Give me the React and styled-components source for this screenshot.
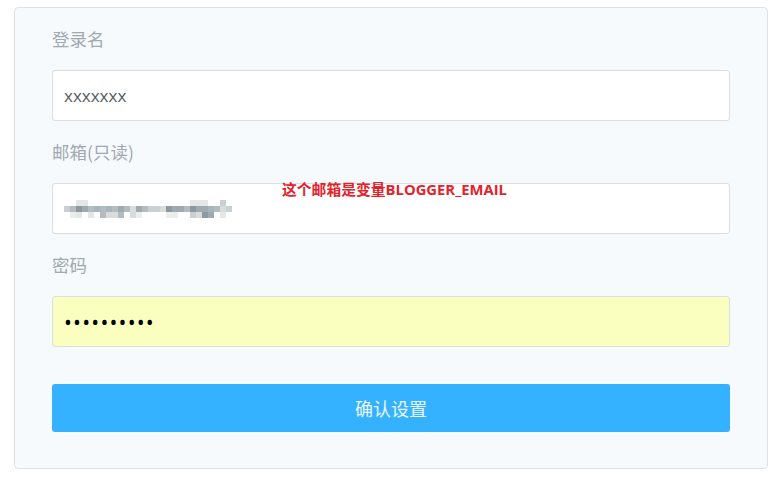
import React from "react"
import styled, { createGlobalStyle } from "styled-components"

const GlobalStyle = createGlobalStyle`
  html, body {
    margin: 0;
    padding: 0;
    background: #ffffff;
  }
  body {
    font-family: "Open Sans", "Noto Sans CJK SC", sans-serif;
  }
`

const Page = styled.div`
  padding: 7px 15px 9px 14px;
`

const Panel = styled.form`
  position: relative;
  box-sizing: border-box;
  width: 754px;
  height: 462px;
  padding: 19px 37px 36px;
  background: #f6fafd;
  border: 1px solid #dde3e8;
  border-radius: 4px;
  display: flex;
  flex-direction: column;
`

const Field = styled.div`
  position: relative;
  display: flex;
  flex-direction: column;
  margin-bottom: ${(p) => (p.last ? "37px" : "19px")};
`

const Label = styled.label`
  font-family: "Noto Sans CJK SC", sans-serif;
  font-size: 17.5px;
  line-height: 24px;
  color: #a0a9b1;
  margin-bottom: 19px;
`

const InputBox = styled.div`
  box-sizing: border-box;
  height: 51px;
  border: 1px solid #dadfe3;
  border-radius: 3px;
  background: ${(p) => p.bg || "#ffffff"};
  display: flex;
  align-items: center;
  padding: 0 11px;
`

const TextInput = styled.input`
  flex: 1;
  border: none;
  outline: none;
  background: transparent;
  padding: 0;
  font-family: "Open Sans", sans-serif;
  font-size: ${(p) => (p.type === "password" ? "21px" : "17px")};
  letter-spacing: ${(p) => (p.type === "password" ? "1.2px" : "0")};
  color: ${(p) => (p.type === "password" ? "#000" : "#555b60")};
`

const Note = styled.span`
  position: absolute;
  left: 230px;
  top: 40px;
  font-family: "Open Sans", "Noto Sans CJK SC", sans-serif;
  font-weight: 700;
  font-size: 14.8px;
  line-height: 18px;
  color: #e3232c;
  white-space: nowrap;
`

const Submit = styled.button`
  height: 48px;
  border: none;
  border-radius: 3px;
  background: #35b2ff;
  color: #eaf6ff;
  font-family: "Noto Sans CJK SC", sans-serif;
  font-size: 18px;
  cursor: pointer;
`

const mosaicColors = [
  "#f3f5f4", "#e3e7e8", "#c9d0d4", "#b3bcc1", "#9ea9b0", "#d8dcda", "#a7b5bd", "#eceeeb", "#8d99a1",
]

const rows = [
  "0011000000000000000001110020",
  "2384363634354322584438446352",
  "0710103553057000077002584010",
]

const Mosaic = () => (
  <svg width="168" height="18" viewBox="0 0 168 18">
    {rows.map((row, r) =>
      row.split("").map((c, i) => (
        <rect
          key={`${r}-${i}`}
          x={i * 6}
          y={r * 6}
          width="6"
          height="6"
          fill={c === "0" ? "#ffffff" : mosaicColors[Number(c)]}
        />
      ))
    )}
  </svg>
)

export default function App() {
  return (
    <Page>
      <GlobalStyle />
      <Panel onSubmit={(e) => e.preventDefault()}>
        <Field>
          <Label>登录名</Label>
          <InputBox>
            <TextInput defaultValue="xxxxxxx" />
          </InputBox>
        </Field>
        <Field>
          <Label>邮箱(只读)</Label>
          <InputBox>
            <Mosaic />
          </InputBox>
          <Note>这个邮箱是变量BLOGGER_EMAIL</Note>
        </Field>
        <Field last>
          <Label>密码</Label>
          <InputBox bg="#fafebf">
            <TextInput type="password" defaultValue="1234567890" />
          </InputBox>
        </Field>
        <Submit type="submit">确认设置</Submit>
      </Panel>
    </Page>
  )
}
